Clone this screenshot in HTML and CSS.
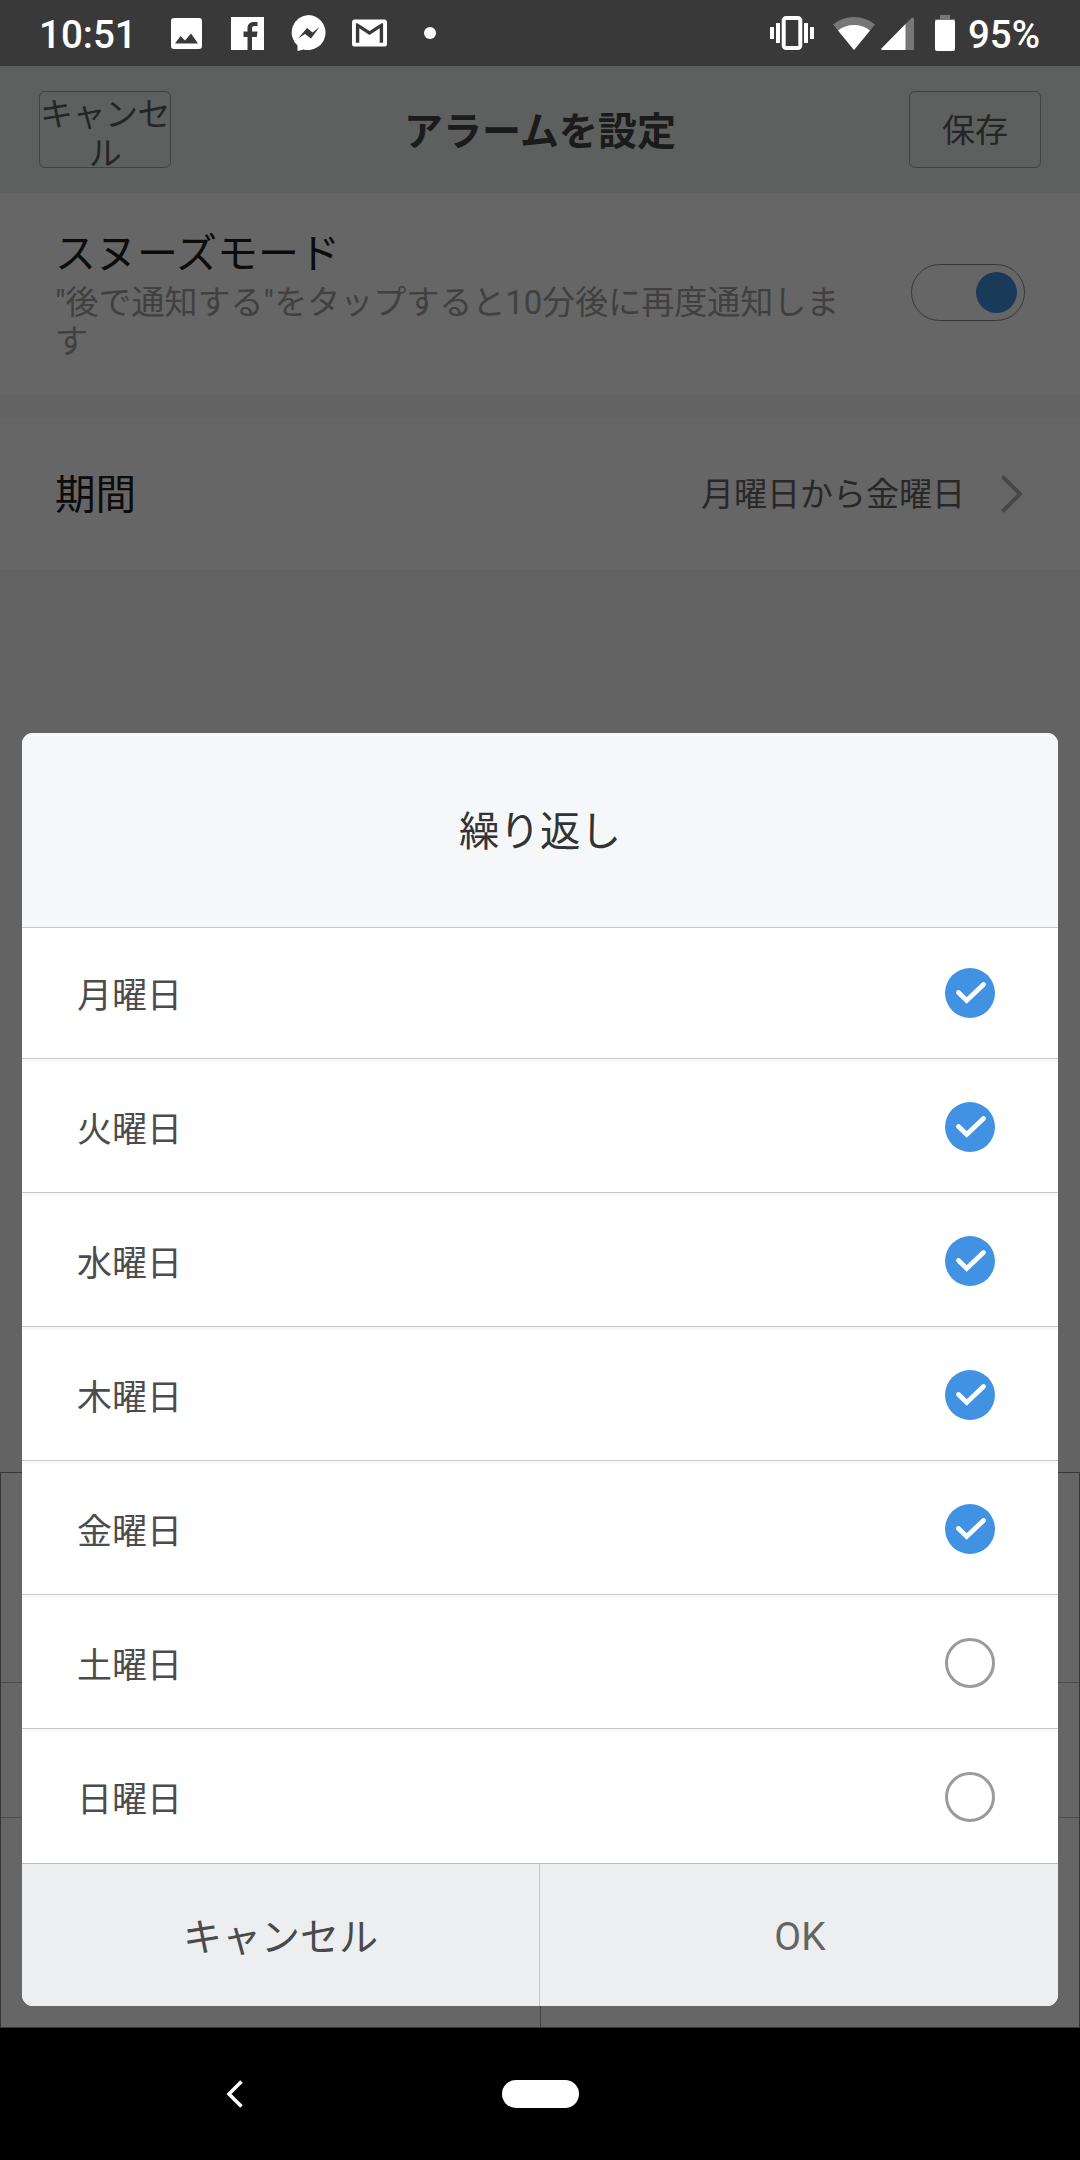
FILE: index.html
```html
<!DOCTYPE html>
<html lang="ja">
<head>
  <meta charset="UTF-8" />
  <meta name="viewport" content="width=device-width, initial-scale=1.0"/>
  <title>アラームを設定</title>
  <link rel="stylesheet" href="styles.css">
</head>
<body>

  <!-- Status bar -->
  <div class="status-bar">
    <span class="time">10:51</span>
    <div class="notifications">
      <svg width="31" height="31" viewBox="0 0 31 31" fill="#fff">
        <path fill-rule="evenodd" d="M3 0h25a3 3 0 0 1 3 3v25a3 3 0 0 1-3 3H3a3 3 0 0 1-3-3V3a3 3 0 0 1 3-3zM4 25.500h23L20 15.500l-6 7-4.500-4.500z"/>
      </svg>
      <svg class="facebook" width="33" height="33" viewBox="0 0 33 33" fill="#fff">
        <path d="M0 0h33v33H21V20h4.800l.7-5.500H21v-3c0-1.600.7-2.500 2.500-2.500h3V5H23c-4.500 0-6.500 2.500-6.500 6.300v3.200h-4V20h4v13H0z"/>
      </svg>
      <svg class="messenger" width="35" height="36" viewBox="0 0 35 36" fill="#fff">
        <path fill-rule="evenodd" d="M17.500 0a17.500 17.500 0 1 1-5 34.400L6.500 36V30.500A17.500 17.500 0 0 1 17.500 0zM7 23.500l9-10.500 5.500 4.500 7-5.500-8.500 11.500-6-4.500z"/>
      </svg>
      <svg width="35" height="28" viewBox="0 0 36 28" fill="#fff">
        <path fill-rule="evenodd" d="M3 0h30a3 3 0 0 1 3 3v22a3 3 0 0 1-3 3H3a3 3 0 0 1-3-3V3a3 3 0 0 1 3-3zM4 4v20h3.500V9L18 16l10.500-7v15H32V4h-1.500L18 12 5.500 4z"/>
      </svg>
      <span class="more-dot"></span>
    </div>
    <div class="indicators">
      <svg class="vibrate" width="44" height="34" viewBox="0 0 44 34" fill="#fff">
        <path d="M0 11h4v12H0zM6 7h4v20H6zM34 7h4v20h-4zM40 11h4v12h-4z"/>
        <rect x="13.700" y="2" width="16.600" height="30" rx="2.500" fill="none" stroke="#fff" stroke-width="4"/>
      </svg>
      <svg class="wifi" width="42" height="33" viewBox="0 0 42 33">
        <path fill="#777" d="M21 33L0 7.500Q9 0 21 0t21 7.500z"/>
        <path fill="#fff" d="M21 33L5 13.500Q12 8 21 8t16 5.500z"/>
      </svg>
      <svg class="signal" width="33" height="33" viewBox="0 0 33 33">
        <path fill="#777" d="M1.500 33Q-.5 33 .5 31.500L30.500 1Q33-.5 33 2v30q0 1-1 1z"/>
        <path fill="#fff" d="M1.500 33Q-.5 33 .5 31.500L24.500 7v26z"/>
      </svg>
      <svg class="battery" width="20" height="36" viewBox="0 0 20 36">
        <path fill="#777" d="M5 0h10v4h5v3H0V4h5z"/>
        <rect y="5" width="20" height="31" rx="2" fill="#fff"/>
      </svg>
      <span class="percent">95%</span>
    </div>
  </div>

  <!-- Alarm settings -->
  <main class="page">
    <header class="header">
      <button class="header-btn">キャンセル</button>
      <h1>アラームを設定</h1>
      <button class="header-btn">保存</button>
    </header>

    <section class="setting snooze">
      <div class="setting-text">
        <h2>スヌーズモード</h2>
        <p>"後で通知する"をタップすると10分後に再度通知します</p>
      </div>
      <span class="toggle"></span>
    </section>

    <section class="setting period">
      <h2>期間</h2>
      <span class="value">月曜日から金曜日</span>
      <svg width="22" height="38" viewBox="0 0 22 38" fill="none" stroke="#b2b2b2" stroke-width="4" stroke-linecap="round" stroke-linejoin="round">
        <path d="M2.500 2.500L19 19 2.500 35.500"/>
      </svg>
    </section>

    <div class="sheet">
      <div class="sheet-row tall"></div>
      <div class="sheet-row"></div>
      <div class="sheet-row split"><span></span><span></span></div>
    </div>
  </main>

  <!-- Repeat dialog -->
  <div class="overlay">
    <div class="dialog">
      <h2 class="dialog-title">繰り返し</h2>
      <ul class="days">
        <li><span>月曜日</span><svg class="check" viewBox="0 0 50 50"><circle cx="25" cy="25" r="25"/><path d="M13.500 24.500l8.200 8L38.500 16.500"/></svg></li>
        <li><span>火曜日</span><svg class="check" viewBox="0 0 50 50"><circle cx="25" cy="25" r="25"/><path d="M13.500 24.500l8.200 8L38.500 16.500"/></svg></li>
        <li><span>水曜日</span><svg class="check" viewBox="0 0 50 50"><circle cx="25" cy="25" r="25"/><path d="M13.500 24.500l8.200 8L38.500 16.500"/></svg></li>
        <li><span>木曜日</span><svg class="check" viewBox="0 0 50 50"><circle cx="25" cy="25" r="25"/><path d="M13.500 24.500l8.200 8L38.500 16.500"/></svg></li>
        <li><span>金曜日</span><svg class="check" viewBox="0 0 50 50"><circle cx="25" cy="25" r="25"/><path d="M13.500 24.500l8.200 8L38.500 16.500"/></svg></li>
        <li><span>土曜日</span><i class="circle"></i></li>
        <li><span>日曜日</span><i class="circle"></i></li>
      </ul>
      <div class="actions">
        <button>キャンセル</button>
        <button class="ok">OK</button>
      </div>
    </div>
  </div>

  <!-- Navigation bar -->
  <nav class="nav-bar">
    <svg class="back" width="18" height="28" viewBox="0 0 18 28" fill="none" stroke="#fff" stroke-width="3.600">
      <path d="M15.500 1.500L3 14l12.500 12.500"/>
    </svg>
    <span class="home"></span>
  </nav>

</body>
</html>
```
FILE: styles.css
```css
* {
  box-sizing: border-box;
}

body {
  margin: 0;
  width: 1080px;
  height: 2160px;
  display: flex;
  flex-direction: column;
  position: relative;
  font-family: Roboto, "Noto Sans CJK JP", sans-serif;
  overflow: hidden;
}

h1, h2, p, ul {
  margin: 0;
  padding: 0;
  font-weight: normal;
}

button {
  font-family: inherit;
  padding: 0;
  border: none;
  background: none;
}

svg {
  display: block;
  flex: none;
}

/* status bar */
.status-bar {
  height: 66px;
  flex: none;
  display: flex;
  align-items: center;
  padding: 0 40px 0 39px;
  background: #393939;
  color: #fff;
  font-size: 38.5px;
  font-weight: 500;
}

.time {
  width: 132px;
  padding-top: 2px;
}

.percent {
  padding-top: 2px;
}

.notifications {
  display: flex;
  align-items: center;
  gap: 26px;
}

.facebook {
  margin-left: 3px;
}

.messenger {
  margin-left: 1px;
}

.more-dot {
  width: 12px;
  height: 12px;
  margin-left: 11px;
  border-radius: 50%;
  background: #fff;
}

.indicators {
  display: flex;
  align-items: center;
  margin-left: auto;
}

.wifi {
  margin: 0 6px 0 19px;
}

.battery {
  margin: 0 13px 0 21px;
}

/* page behind the dialog */
.page {
  flex: 1;
  display: flex;
  flex-direction: column;
  background: #f8f8f8;
}

.header {
  height: 127px;
  display: flex;
  align-items: center;
  justify-content: space-between;
  padding: 0 39px;
  background: #ebf0ee;
}

.header h1 {
  padding-bottom: 4px;
  font-size: 39px;
  font-weight: bold;
  color: #444;
}

.header-btn {
  width: 132px;
  height: 77px;
  padding-top: 2px;
  border: 1px solid #a0a3a2;
  border-radius: 6px;
  font-size: 33px;
  line-height: 39px;
  color: #5c5c5c;
  word-break: break-all;
}

.header-btn:first-child {
  padding-top: 3px;
  letter-spacing: -0.5px;
}

.setting {
  display: flex;
  align-items: center;
  padding: 0 55px;
  background: #fff;
}

.setting h2 {
  font-size: 40.6px;
  line-height: 48px;
  color: #202020;
}

.snooze {
  height: 202px;
  padding-bottom: 4px;
  margin-bottom: 23px;
}

.setting-text {
  width: 800px;
  padding-top: 6px;
}

.setting .setting-text h2 {
  margin-bottom: 5px;
  font-size: 41px;
}

.setting-text p {
  font-size: 33px;
  line-height: 39px;
  color: #a0a0a0;
}

.toggle {
  display: flex;
  align-items: center;
  justify-content: flex-end;
  width: 114px;
  height: 57px;
  margin-left: auto;
  padding-right: 7px;
  border: 1px solid #8c8c8c;
  border-radius: 29px;
}

.toggle::after {
  content: "";
  width: 41px;
  height: 41px;
  border-radius: 50%;
  background: #4192e2;
}

.period {
  height: 151px;
  padding-right: 57px;
}

.period h2 {
  padding-top: 3px;
}

.value {
  margin: 0 36px 0 auto;
  padding-bottom: 3px;
  font-size: 33px;
  color: #646464;
}

/* bottom sheet, mostly hidden by the dialog */
.sheet {
  height: 556px;
  margin-top: auto;
  display: flex;
  flex-direction: column;
  border: 1px solid #8c8c8c;
  background: #fff;
}

.sheet-row {
  height: 135px;
  border-bottom: 1px solid #bebebe;
}

.sheet-row.tall {
  height: 210px;
}

.sheet-row.split {
  flex: 1;
  display: grid;
  grid-template-columns: 1fr 1fr;
  border: none;
}

.split span + span {
  border-left: 1px solid #a0a0a0;
}

/* dialog */
.overlay {
  position: absolute;
  top: 66px;
  left: 0;
  width: 100%;
  height: 1962px;
  padding: 0 22px 22px;
  display: flex;
  align-items: flex-end;
  background: rgba(0, 0, 0, 0.6);
}

.dialog {
  width: 100%;
  border-radius: 11px;
  overflow: hidden;
  background: #fff;
}

.dialog-title {
  height: 195px;
  display: flex;
  align-items: center;
  justify-content: center;
  padding-bottom: 3px;
  border-bottom: 1px solid #c5c7c9;
  background: #f6f7f9;
  font-size: 40.5px;
  color: #333;
}

.days {
  list-style: none;
}

.days li {
  height: 134px;
  display: flex;
  align-items: center;
  justify-content: space-between;
  padding: 0 63px 0 55px;
  border-top: 3px solid #f8f8f8;
  border-bottom: 1px solid #c8c8c8;
  font-size: 35px;
  color: #4c4c4c;
}

.days li span {
  padding-bottom: 2px;
}

.days li:first-child {
  height: 131px;
  border-top: none;
}

.days li:last-child {
  height: 135px;
  padding-bottom: 1px;
  border-bottom-color: #bbbcbe;
}

.check,
.circle {
  width: 50px;
  height: 50px;
}

.check circle {
  fill: #4192e2;
}

.check path {
  fill: none;
  stroke: #fff;
  stroke-width: 4.8;
  stroke-linecap: round;
}

.circle {
  border: 3px solid #9b9b9b;
  border-radius: 50%;
}

.actions {
  height: 142px;
  display: grid;
  grid-template-columns: 1fr 1fr;
  background: #edeef0;
}

.actions button {
  padding-bottom: 3px;
  font-size: 39px;
  color: #4a4a4a;
}

.actions button:first-child {
  border-right: 1px solid #c4c5c7;
}

.actions .ok {
  padding: 3px 0 0 2px;
  color: #636563;
}

/* navigation bar */
.nav-bar {
  height: 132px;
  flex: none;
  display: grid;
  grid-template-columns: 226px 1fr 226px;
  align-items: center;
  background: #000;
}

.back {
  grid-column: 2;
  grid-row: 1;
}

.home {
  grid-column: 2;
  grid-row: 1;
  justify-self: center;
  width: 77px;
  height: 28px;
  border-radius: 14px;
  background: #fff;
}
```
